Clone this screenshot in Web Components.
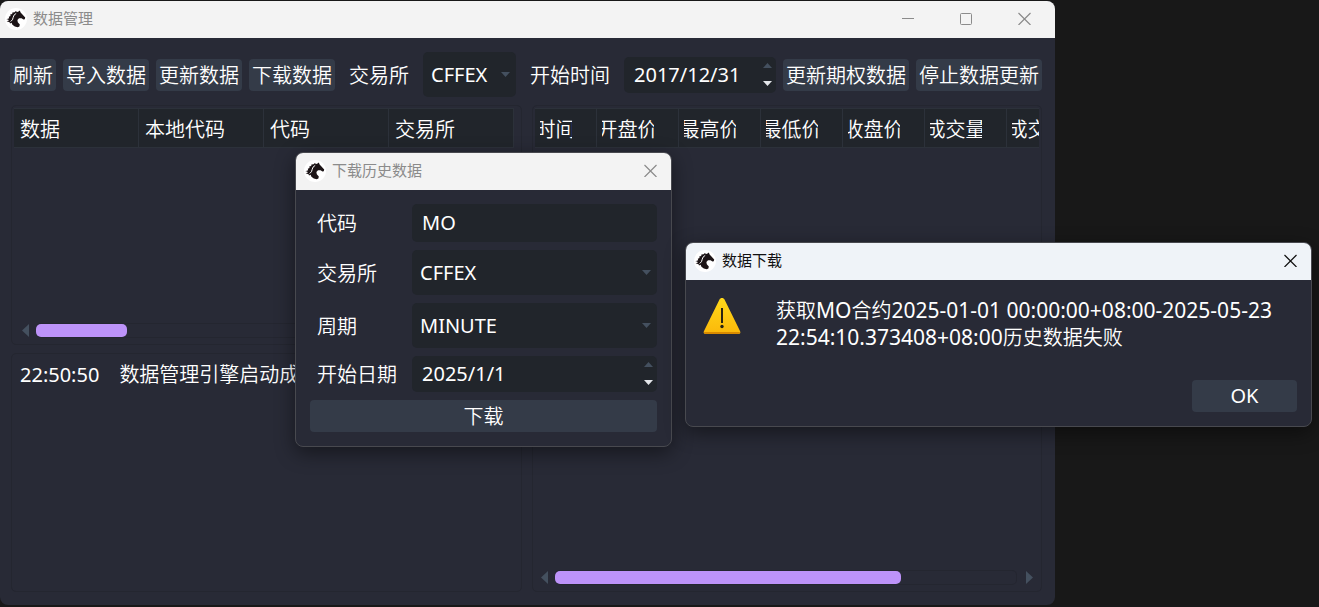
<!DOCTYPE html>
<html lang="zh-CN">
<head>
<meta charset="utf-8">
<title>数据管理</title>
<style>
  html, body { height: 100%; }
  body {
    margin: 0;
    overflow: hidden;
    background: #181818;
    color: #fff;
    font-family: "Noto Sans", "Noto Sans CJK SC", sans-serif;
    font-size: 20px;
    font-weight: 350;
    line-height: 28px;
  }
  desk-area { height: 100%; }
  .main { left: 0; top: 1px; width: 80%; height: calc(100% - 3px); }
  .download { left: 295px; top: 152px; width: 375px; }
  .message { left: 685px; top: 242px; width: 625px; }
</style>
</head>
<body>
<desk-area>
  <app-window class="main" heading="数据管理" controls="full">
    <data-manager></data-manager>
  </app-window>
  <app-window class="download" heading="下载历史数据" floating>
    <download-form></download-form>
  </app-window>
  <app-window class="message" heading="数据下载" floating active>
    <message-box>获取<span lang="en">MO</span>合约<span lang="en">2025-01-01 00:00:00+08:00-2025-05-23 22:54:10.373408+08:00</span>历史数据失败</message-box>
  </app-window>
</desk-area>

<script>
function define(name, html, setup) {
  customElements.define(name, class extends HTMLElement {
    constructor() {
      super();
      const root = this.attachShadow({ mode: "open" });
      const template = document.createElement("template");
      template.innerHTML = "<style>:host,*{box-sizing:border-box}</style>" + html;
      root.append(template.content.cloneNode(true));
    }
    connectedCallback() {
      if (setup) setup(this, this.shadowRoot);
    }
  });
}

define("desk-area", `
  <style>
    :host { display: block; position: relative; overflow: hidden; }
    ::slotted(*) { position: absolute; }
  </style>
  <slot></slot>`);

define("horse-logo", `
  <style>
    :host { display: block; width: 22px; height: 22px; }
    svg { display: block; }
  </style>
  <svg width="22" height="22" viewBox="0 0 22 22" aria-hidden="true">
    <circle cx="11" cy="11" r="11" fill="#fff"/>
    <path fill="#1c1416" d="M14.800 2.400 15.600 4.600 17 6 20.200 9.600 19.800 11.200 18.400 11.600 16.600 10.200 14 10.200 12.400 12 12.800 14.200 14.800 16.400 14.400 18.400 12.800 19.200 9.800 18.600 7.400 16.800 6.600 14.800 5 15.400 4.600 14.200 1.600 13.200 4 12.600 3 11.400 1.400 11.200 4.200 10.200 3.800 8.800 5.600 8 5.200 6.600 7.200 6 7.400 4.400 9.600 4.200 10.400 3.200 12.800 4Z"/>
    <path fill="none" stroke="#fff" stroke-width="1" d="M11.200 5.400Q8.400 6.800 8.200 9.400T5.600 13.600"/>
  </svg>`);

define("app-window", `
  <style>
    :host { display: flex; flex-direction: column; box-sizing: content-box; border-radius: 8px; overflow: hidden; background: #282a36; }
    :host([floating]) { border: 1px solid #48494f; box-shadow: 0 6px 20px rgba(0,0,0,.45); }
    header { display: flex; align-items: center; height: 37px; flex: none; background: #f3f3f3; color: #8b8b8b; padding: 0 2px 2px 5px; font-size: 15px; line-height: 20px; }
    :host([floating]) header { padding: 0 0 2px 8px; }
    :host([active]) header { background: #eff3f8; color: #111; }
    h1 { flex: 1; margin: 0; padding: 0 0 1px 6px; font: inherit; font-weight: 400; }
    button { width: 58px; height: 35px; padding: 0; border: 0; background: none; color: inherit; display: grid; place-items: center; }
    :host([floating]) button { width: 42px; }
    .extra { display: none; }
    :host([controls=full]) .extra { display: grid; }
    main { flex: 1; min-height: 0; }
    svg { display: block; fill: none; stroke: currentColor; }
  </style>
  <header>
    <horse-logo></horse-logo>
    <h1></h1>
    <button class="extra" aria-label="最小化"><svg width="13" height="13"><path d="M0 6.500h12"/></svg></button>
    <button class="extra" aria-label="最大化"><svg width="13" height="13"><rect x=".5" y="1.500" width="11" height="11" rx="1"/></svg></button>
    <button aria-label="关闭"><svg width="13" height="13"><path stroke-width="1.200" d="M.5 1l12 12M12.500 1l-12 12"/></svg></button>
  </header>
  <main><slot></slot></main>`,
  (host, root) => { root.querySelector("h1").textContent = host.getAttribute("heading"); });

define("dark-button", `
  <style>
    :host { display: block; }
    button { display: block; width: 100%; height: 32px; padding: 0 3px; border: 0; border-radius: 4px; background: #343b48; color: inherit; font: inherit; line-height: 34px; white-space: nowrap; }
    :host([lang=en]) button { font-weight: 400; line-height: 32px; }
  </style>
  <button><slot></slot></button>`);

define("combo-box", `
  <style>
    :host { display: grid; align-items: center; background: #21252b; border-radius: 5px; height: 45px; }
    select { grid-area: 1/1; appearance: none; width: 100%; height: 100%; padding: 0 20px 0 8px; border: 0; background: none; color: inherit; font: inherit; font-weight: 400; }
    svg { grid-area: 1/1; justify-self: end; margin-right: 6px; pointer-events: none; }
  </style>
  <select><option></option></select>
  <svg width="9" height="5"><path fill="#44505f" d="M0 0h9L4.500 5z"/></svg>`,
  (host, root) => {
    root.querySelector("option").textContent = host.getAttribute("value");
    root.querySelector("select").setAttribute("aria-label", host.getAttribute("label"));
  });

define("text-box", `
  <style>
    :host { display: flex; height: 38px; background: #21252b; border-radius: 5px; }
    input { flex: 1; min-width: 0; border: 0; padding: 0 10px; background: none; color: inherit; font: inherit; font-weight: 400; outline: 0; }
  </style>
  <input type="text">`,
  (host, root) => {
    const input = root.querySelector("input");
    input.value = host.getAttribute("value");
    input.setAttribute("aria-label", host.getAttribute("label"));
  });

define("date-box", `
  <style>
    :host { display: flex; height: 36px; background: #21252b; border-radius: 5px; }
    input { flex: 1; min-width: 0; border: 0; padding: 0 0 0 10px; background: none; color: inherit; font: inherit; font-weight: 400; outline: 0; }
    div { display: flex; flex-direction: column; justify-content: space-between; width: 14px; padding: 5px 0 6px; margin-right: 2px; }
    button { display: grid; place-items: center; padding: 0; border: 0; background: none; height: 7px; }
    svg { display: block; }
  </style>
  <input type="text">
  <div>
    <button aria-label="增加"><svg width="9" height="5"><path fill="#44505f" d="M0 5h9L4.500 0z"/></svg></button>
    <button aria-label="减少"><svg width="9" height="5"><path fill="#e4e6ea" d="M0 0h9L4.500 5z"/></svg></button>
  </div>`,
  (host, root) => {
    const input = root.querySelector("input");
    input.value = host.getAttribute("value");
    input.setAttribute("aria-label", host.getAttribute("label"));
  });

define("scroll-bar", `
  <style>
    :host { display: flex; align-items: center; gap: 7px; height: 15px; flex: none; }
    .track { flex: 1; height: 15px; border: 1px solid #242630; border-left: 0; border-radius: 5px; }
    .thumb { height: 13px; width: var(--thumb); border-radius: 5px; background: #bd93f9; }
    svg { display: block; fill: #44505f; }
    svg:last-child { margin-left: 2px; }
  </style>
  <svg width="7" height="13"><path d="M7 0v13L0 6.500z"/></svg>
  <div class="track"><div class="thumb"></div></div>
  <svg width="7" height="13"><path d="M0 0v13l7-6.500z"/></svg>`);

define("data-pane", `
  <style>
    :host { display: flex; flex-direction: column; min-width: 0; min-height: 0; overflow: hidden; border: 1px solid #242630; border-radius: 5px; padding: 2px; }
    .view { flex: 1; min-height: 0; overflow: hidden; }
  </style>
  <div class="view"><slot></slot></div>
  <slot name="scroll"></slot>`);

define("head-table", `
  <style>
    :host { display: block; }
    table { border-collapse: separate; border-spacing: 0; table-layout: fixed; width: 0; background: #21252b; }
    th { height: 40px; padding: 4px 0 0; border: solid #2c313a; border-width: 1px 1px 1px 0; font-weight: inherit; }
    div { display: flex; overflow: hidden; white-space: nowrap; margin: 0 6px; }
    table.clipped div { justify-content: center; margin: 0 24px 0 5px; }
  </style>
  <table><thead><tr></tr></thead></table>`,
  (host, root) => {
    const widths = host.getAttribute("widths").split(",");
    if (host.hasAttribute("clipped")) root.querySelector("table").className = "clipped";
    host.getAttribute("columns").split(",").forEach((text, i) => {
      const th = document.createElement("th");
      const box = document.createElement("div");
      th.scope = "col";
      th.style.width = (widths[i] || widths[widths.length - 1]) + "px";
      box.textContent = text;
      th.append(box);
      root.querySelector("tr").append(th);
    });
  });

define("log-table", `
  <style>
    :host { display: block; }
    table { border-collapse: collapse; }
    td { padding: 5px 14px 5px 6px; white-space: nowrap; }
    td:first-child { font-weight: 400; }
  </style>
  <table><tbody><tr><td>22:50:50</td><td>数据管理引擎启动成功</td></tr></tbody></table>`);

define("data-manager", `
  <style>
    :host { display: flex; flex-direction: column; gap: 8px; height: 100%; padding: 14px 13px 13px 10px; }
    .bar { display: flex; align-items: center; gap: 7px; height: 45px; flex: none; }
    .bar > * { flex: none; }
    .bar span { padding: 2px 7px 0; }
    .bar combo-box { width: 93px; }
    .bar date-box { width: 152px; }
    .panes { flex: 1; min-height: 0; margin-left: 1px; display: grid; grid-template-columns: 1fr 1fr; grid-template-rows: 1fr 1fr; gap: 8px 10px; }
    .quotes { grid-column: 2; grid-row: 1 / 3; }
    scroll-bar { margin: 0 6px 4px; --thumb: 346px; }
    .codes scroll-bar { margin-left: 8px; --thumb: 91px; }
  </style>
  <div class="bar">
    <dark-button>刷新</dark-button>
    <dark-button>导入数据</dark-button>
    <dark-button>更新数据</dark-button>
    <dark-button>下载数据</dark-button>
    <span>交易所</span>
    <combo-box value="CFFEX" label="交易所"></combo-box>
    <span>开始时间</span>
    <date-box value="2017/12/31" label="开始时间"></date-box>
    <dark-button>更新期权数据</dark-button>
    <dark-button>停止数据更新</dark-button>
  </div>
  <div class="panes">
    <data-pane class="codes">
      <head-table columns="数据,本地代码,代码,交易所" widths="125"></head-table>
      <scroll-bar slot="scroll"></scroll-bar>
    </data-pane>
    <data-pane class="quotes">
      <head-table clipped columns="时间,开盘价,最高价,最低价,收盘价,成交量,成交额" widths="62,82"></head-table>
      <scroll-bar slot="scroll"></scroll-bar>
    </data-pane>
    <data-pane><log-table></log-table></data-pane>
  </div>`);

define("download-form", `
  <style>
    :host { display: block; padding: 14px; }
    form { display: grid; grid-template-columns: 95px minmax(0, 1fr); align-items: center; row-gap: 8px; }
    span { padding: 2px 0 0 7px; white-space: nowrap; }
    text-box, combo-box, date-box { margin-left: 7px; }
    dark-button { grid-column: 1 / 3; }
  </style>
  <form>
    <span>代码</span><text-box value="MO" label="代码"></text-box>
    <span>交易所</span><combo-box value="CFFEX" label="交易所"></combo-box>
    <span>周期</span><combo-box value="MINUTE" label="周期"></combo-box>
    <span>开始日期</span><date-box value="2025/1/1" label="开始日期"></date-box>
    <dark-button>下载</dark-button>
  </form>`);

define("message-box", `
  <style>
    :host { display: flex; flex-direction: column; padding: 17px 14px 14px 17px; line-height: 27px; }
    .row { display: flex; gap: 35px; }
    svg { flex: none; }
    p { margin: 0; }
    ::slotted(span) { font-size: 21px; font-weight: 400; }
    dark-button { width: 105px; align-self: flex-end; margin-top: 29px; }
  </style>
  <div class="row">
    <svg width="38" height="38" viewBox="0 0 38 38" role="img" aria-label="警告">
      <defs><linearGradient id="g" x2="0" y2="1"><stop stop-color="#ffd91a"/><stop offset="1" stop-color="#fbb80a"/></linearGradient></defs>
      <path fill="url(#g)" d="M16.500 2.500C17.500.5 20.500.5 21.500 2.500L37 34C38 36 37 37 35 37H3C1 37 0 36 1 34Z"/>
      <path fill="#d98a00" d="M1 35h36q0 2-2 2H3q-2 0-2-2Z"/>
      <path stroke="#2a2412" stroke-width="2" d="M19 11v15"/><circle cx="19" cy="29.500" r="1.700" fill="#2a2412"/>
    </svg>
    <p><slot></slot></p>
  </div>
  <dark-button lang="en">OK</dark-button>`);
</script>
</body>
</html>
